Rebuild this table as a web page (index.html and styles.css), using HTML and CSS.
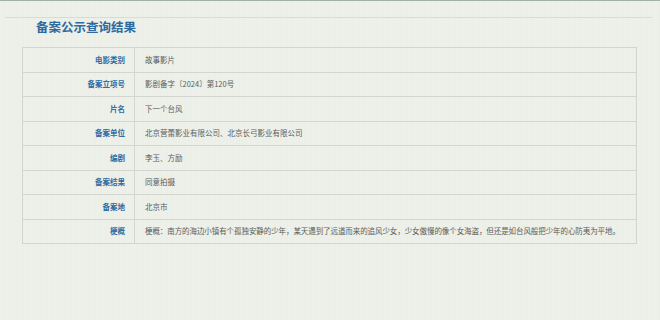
FILE: index.html
```html
<!DOCTYPE html>
<html lang="zh-CN">
<head>
<meta charset="utf-8">
<title>备案公示查询结果</title>
<link rel="stylesheet" href="styles.css">
</head>
<body>
<div class="topline"></div>
<div class="rule"></div>
<h1 class="title">备案公示查询结果</h1>
<table class="result">
  <tr><th>电影类别</th><td>故事影片</td></tr>
  <tr><th>备案立项号</th><td>影剧备字〔2024〕第120号</td></tr>
  <tr><th>片名</th><td>下一个台风</td></tr>
  <tr><th>备案单位</th><td>北京营蕾影业有限公司、北京长弓影业有限公司</td></tr>
  <tr><th>编剧</th><td>李玉、方励</td></tr>
  <tr><th>备案结果</th><td>同意拍摄</td></tr>
  <tr><th>备案地</th><td>北京市</td></tr>
  <tr><th>梗概</th><td>梗概：南方的海边小镇有个孤独安静的少年，某天遇到了远道而来的追风少女，少女傲慢的像个女海盗，但还是如台风般把少年的心防夷为平地。</td></tr>
</table>
</body>
</html>
```
FILE: styles.css
```css
html, body {
  margin: 0;
  padding: 0;
}
body {
  width: 660px;
  height: 320px;
  overflow: hidden;
  background-color: #edefe9;
  background-image: repeating-linear-gradient(90deg, rgba(255,255,255,0.08) 0px, rgba(255,255,255,0.08) 1px, rgba(0,0,0,0) 1px, rgba(0,0,0,0) 5px, rgba(0,0,0,0.008) 5px, rgba(0,0,0,0.008) 6px);
  font-family: "Noto Sans CJK SC", "Noto Sans", sans-serif;
}
.topline {
  height: 1px;
  background: #9fb2a3;
}
.rule {
  margin: 16px 8px 0 5px;
  border-top: 1px solid #d9dcd4;
}
.title {
  margin: 1px 0 0 36px;
  font-size: 12.5px;
  line-height: 16px;
  font-weight: bold;
  color: #2d6a9f;
}
.result {
  margin: 12px 0 0 22px;
  width: 615px;
  border-collapse: collapse;
  border: 1px solid #d3d6cf;
  font-size: 7.5px;
}
.result th, .result td {
  border: 1px solid #d3d6cf;
  height: 23.5px;
  padding: 0;
  vertical-align: middle;
  line-height: 10px;
}
.result th {
  width: 102px;
  padding-right: 9px;
  text-align: right;
  font-weight: bold;
  color: #2f6da3;
}
.result td {
  padding-left: 10px;
  text-align: left;
  color: #5a5e5a;
}
.result tr:last-child td {
  letter-spacing: -0.08px;
}
```
